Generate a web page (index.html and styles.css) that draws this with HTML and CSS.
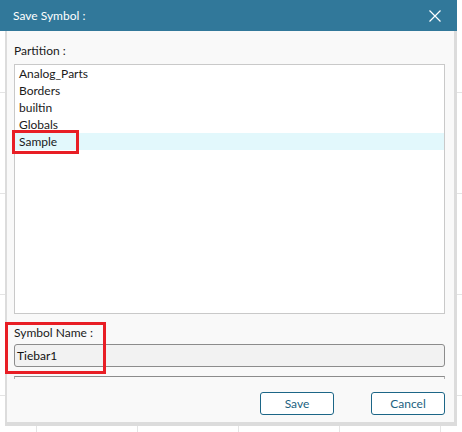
FILE: index.html
```
<!DOCTYPE html>
<html lang="en">

<head>
    <meta charset="UTF-8">
    <meta name="viewport" content="width=device-width, initial-scale=1.0">
    <title>Save Symbol</title>
    <link rel="stylesheet" href="styles.css">
</head>

<body>
    <div class="dialog">
        <div class="title_bar">
            <span class="title">Save Symbol :</span>
            <svg class="close" width="12" height="12" viewBox="0 0 12 12">
                <path d="M0.5 0.5 L11.5 11.5 M11.5 0.5 L0.5 11.5" stroke="#fff" stroke-width="1.2" fill="none" />
            </svg>
        </div>
        <div class="dialog_body">
            <div class="label first">Partition :</div>
            <div class="list">
                <div class="row">Analog_Parts</div>
                <div class="row">Borders</div>
                <div class="row">builtin</div>
                <div class="row">Globals</div>
                <div class="row selected">Sample</div>
            </div>
            <div class="label">Symbol Name :</div>
            <div class="input">Tiebar1</div>
            <div class="edge"></div>
            <div class="buttons">
                <div class="btn">Save</div>
                <div class="btn">Cancel</div>
            </div>
        </div>
        <!-- red callouts -->
        <div class="mark mark_sample"></div>
        <div class="mark mark_name"></div>
    </div>
</body>

</html>
```
FILE: styles.css
```
* {
    box-sizing: border-box;
    margin: 0;
    padding: 0;
    font-family: Lato, "Noto Sans", sans-serif;
}

body {
    width: 462px;
    height: 432px;
    overflow: hidden;
    background-color: #fff;
    background-image:
        linear-gradient(to right, #e4e4e4 1px, transparent 1px),
        linear-gradient(to bottom, #e4e4e4 1px, transparent 1px);
    background-size: 101px 101px;
    background-position: 36px 0, 0 92px;
}

.dialog {
    position: relative;
    width: 457px;
}

.title_bar {
    height: 31px;
    background-color: #31789a;
    display: flex;
    align-items: center;
    justify-content: space-between;
    padding: 0 16px 0 13px;
}

.title {
    color: #fff;
    font-size: 12px;
}

.close {
    display: block;
}

.dialog_body {
    margin-left: 5px;
    background-color: #f9f9f9;
    border-left: 2px solid #dcdcdc;
    border-right: 3px solid #dcdcdc;
    border-bottom: 4px solid #dcdcdc;
    padding: 0 9px 7px 7px;
    display: flex;
    flex-direction: column;
}

.label {
    font-size: 12px;
    line-height: 16px;
    color: #1a1a1a;
    margin-top: 11px;
}

.label.first {
    margin-top: 12px;
}

.list {
    margin-top: 5px;
    height: 250px;
    background-color: #fff;
    border: 1px solid #c9c9c9;
}

.row {
    height: 17px;
    line-height: 17px;
    font-size: 12px;
    color: #1a1a1a;
    padding-left: 4px;
}

.row.selected {
    background-color: #e2f8fc;
}

.input {
    margin-top: 3px;
    height: 23px;
    border: 1px solid #8c8c8c;
    border-radius: 3px;
    background-color: #f2f2f2;
    font-size: 12px;
    line-height: 21px;
    padding-left: 2px;
    color: #111;
}

.edge {
    margin-top: 9px;
    height: 3px;
    border: 1px solid #8c8c8c;
    border-bottom: none;
    border-left-color: #b0b0b0;
    border-right-color: #b0b0b0;
}

.buttons {
    margin-top: 13px;
    display: flex;
    justify-content: flex-end;
    gap: 37px;
}

.btn {
    width: 74px;
    height: 23px;
    border: 1px solid #1c6687;
    border-radius: 3px;
    background-color: #fff;
    color: #1c5f7f;
    font-size: 12px;
    line-height: 21px;
    text-align: center;
}

.mark {
    position: absolute;
    border: 3px solid #e81e25;
}

.mark_sample {
    left: 12px;
    top: 130px;
    width: 67px;
    height: 24px;
}

.mark_name {
    left: 5px;
    top: 322px;
    width: 101px;
    height: 52px;
}
```
